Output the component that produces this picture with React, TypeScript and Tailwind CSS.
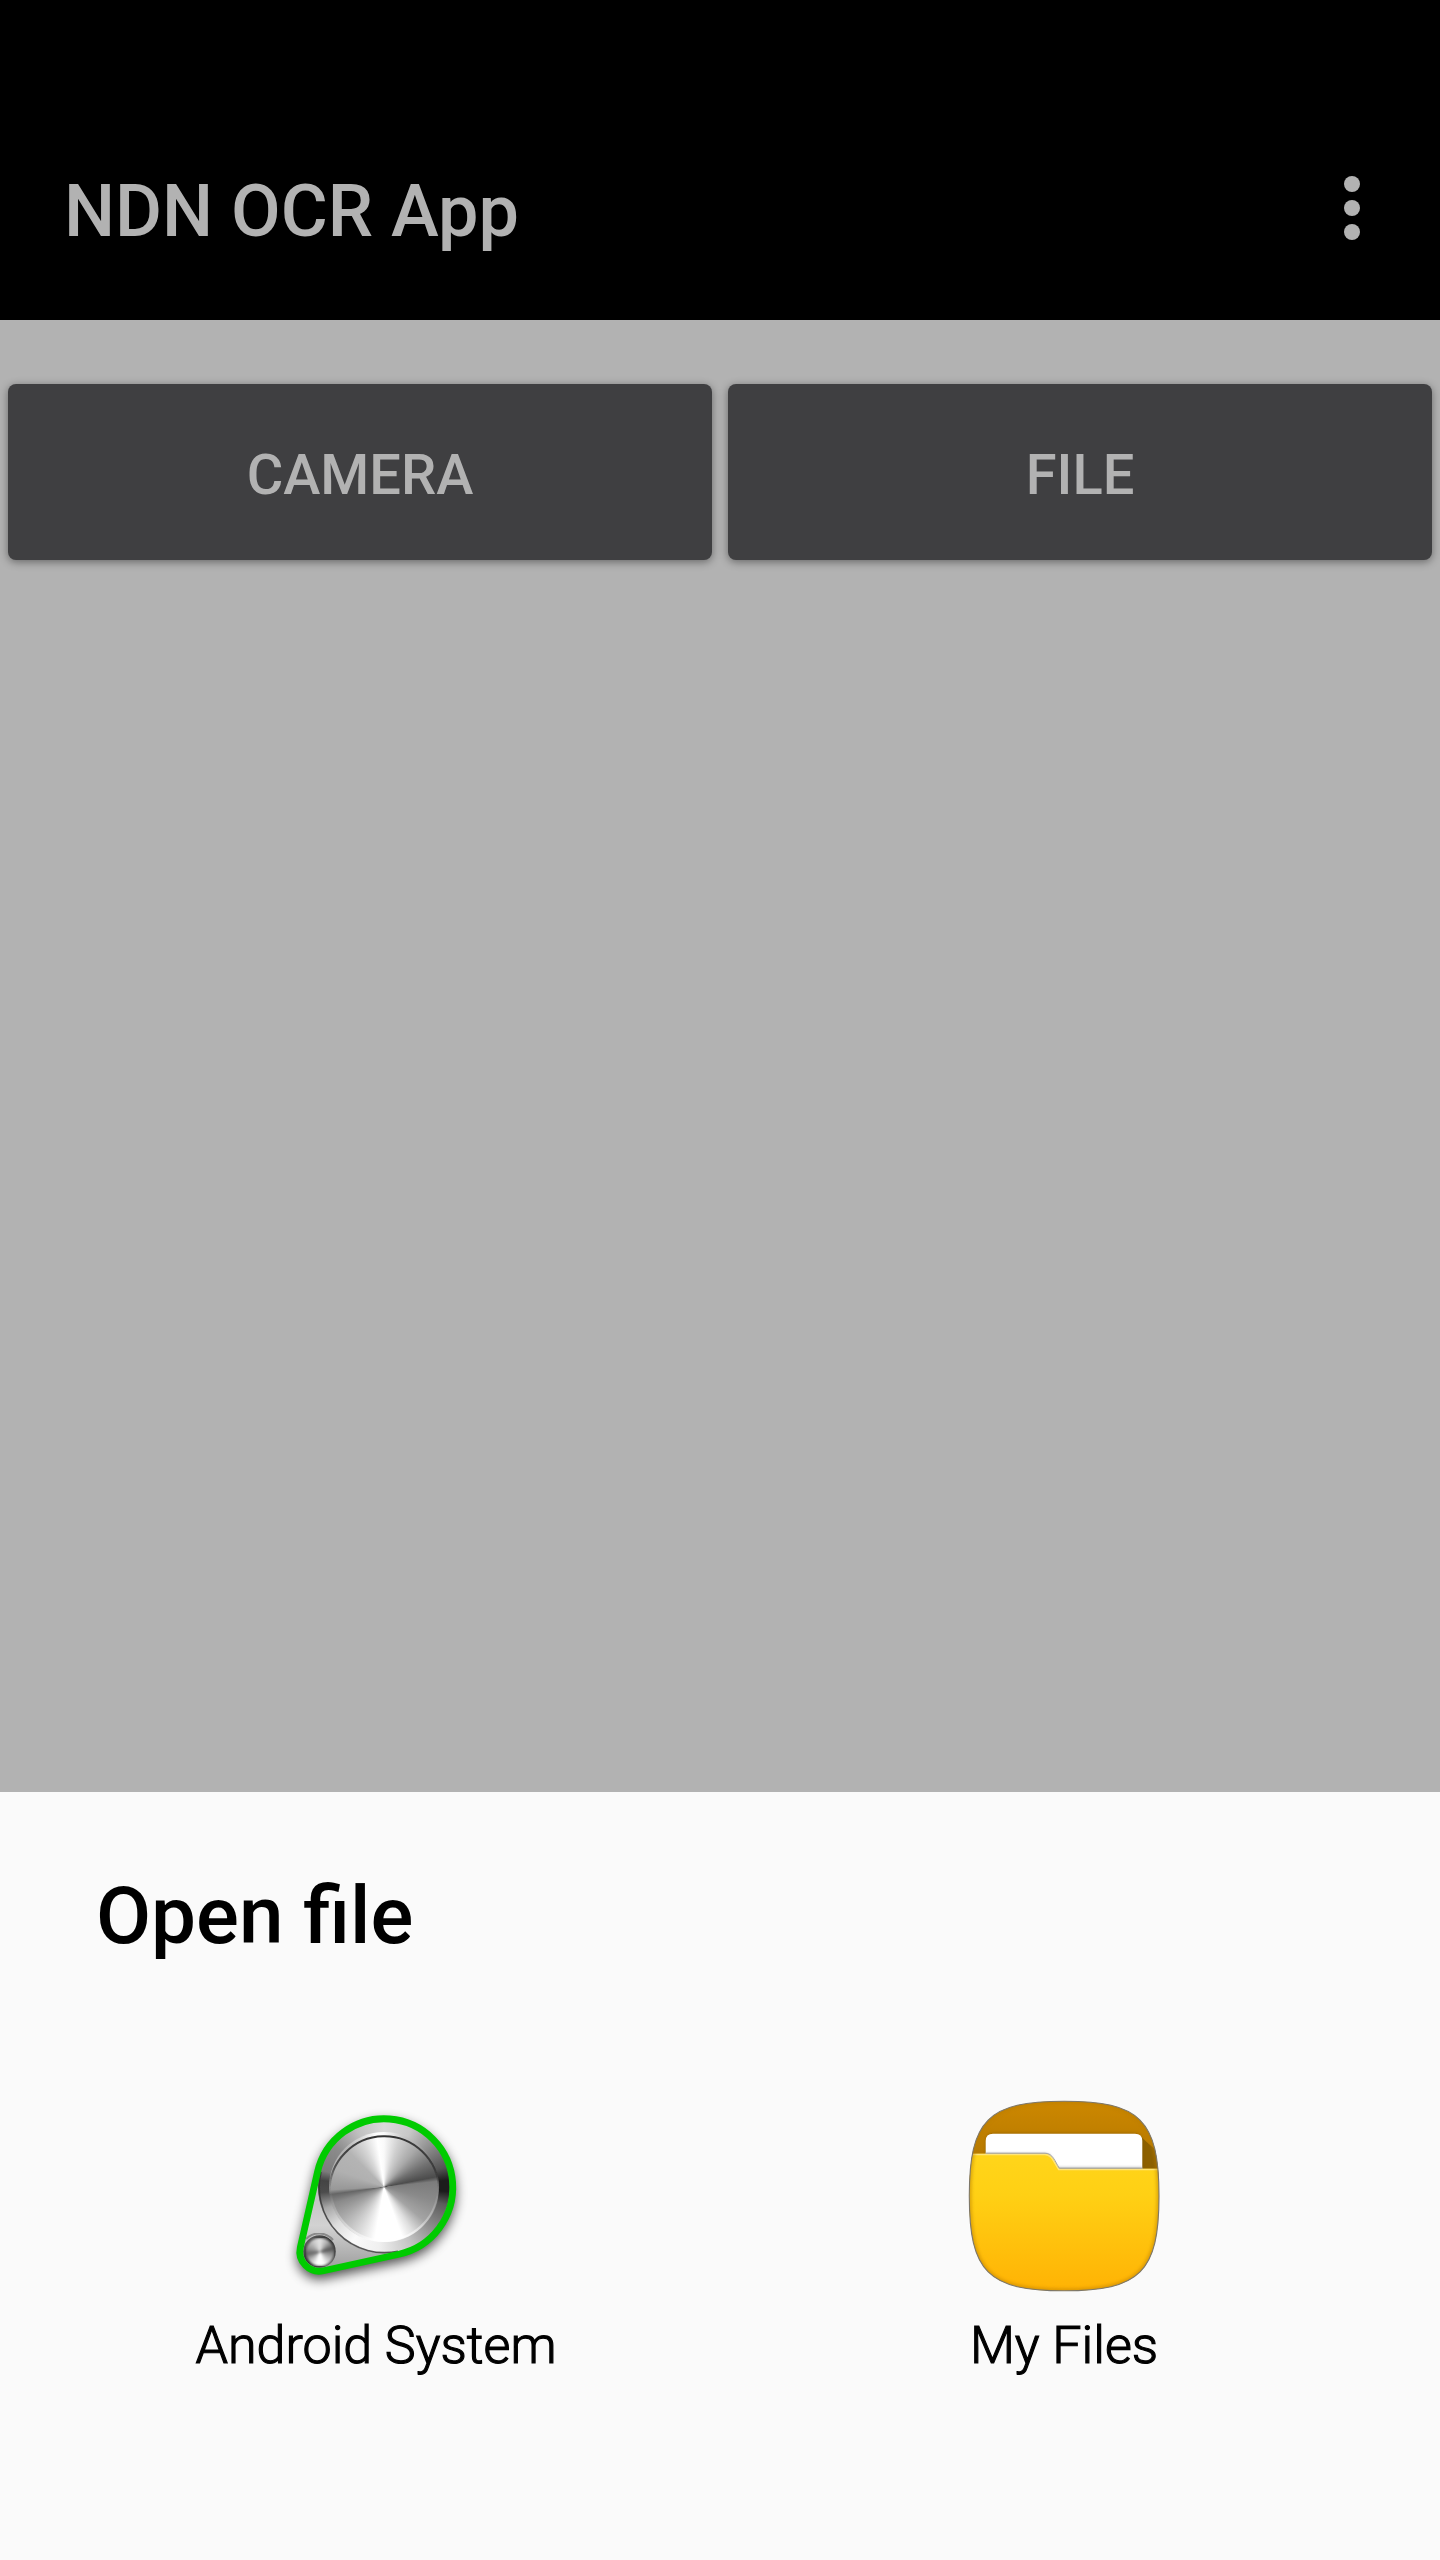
import type { ReactNode } from 'react';

function OverflowIcon() {
  return (
    <svg className="h-24 w-24" viewBox="0 0 96 96" fill="#b2b2b2">
      <circle cx="48" cy="24" r="8" />
      <circle cx="48" cy="48" r="8" />
      <circle cx="48" cy="72" r="8" />
    </svg>
  );
}

function AndroidSystemIcon() {
  const outline =
    'M20.3 147.4 L37.5 72 A68.5 68.5 0 1 1 118.9 154.2 L43.5 170.7 A19.5 19.5 0 0 1 20.3 147.4 Z';
  return (
    <svg className="h-48 w-48 overflow-visible" viewBox="0 0 192 192">
      <defs>
        <filter id="drop" x="-20%" y="-20%" width="140%" height="150%">
          <feGaussianBlur stdDeviation="6" />
        </filter>
        <filter id="soften" x="-5%" y="-5%" width="110%" height="110%">
          <feGaussianBlur stdDeviation="0.7" />
        </filter>
        <linearGradient id="plate" x1="0" y1="0" x2="0" y2="1">
          <stop offset="0" stopColor="#9a9a9a" />
          <stop offset="0.7" stopColor="#d2d2d2" />
          <stop offset="1" stopColor="#9c9c9c" />
        </linearGradient>
        <linearGradient id="rimTop" gradientUnits="userSpaceOnUse" x1="0" y1="32" x2="0" y2="92">
          <stop offset="0" stopColor="#2c2c2c" />
          <stop offset="0.6" stopColor="#2c2c2c" stopOpacity="0.7" />
          <stop offset="1" stopColor="#2c2c2c" stopOpacity="0" />
        </linearGradient>
        <linearGradient id="rimBottom" gradientUnits="userSpaceOnUse" x1="0" y1="92" x2="0" y2="142">
          <stop offset="0" stopColor="#fff" stopOpacity="0" />
          <stop offset="1" stopColor="#fff" stopOpacity="0.6" />
        </linearGradient>
        <linearGradient id="smallRim" x1="0" y1="0" x2="1" y2="1">
          <stop offset="0" stopColor="#6a6a6a" />
          <stop offset="0.5" stopColor="#2c2c2c" />
          <stop offset="1" stopColor="#6c6c6c" />
        </linearGradient>
      </defs>
      <path d={outline} fill="#000" stroke="#000" strokeWidth="6" opacity="0.68" filter="url(#drop)" transform="translate(0 5)" />
      <path d={outline} fill="url(#plate)" />
      <foreignObject x="38.3" y="21.3" width="132" height="132">
        <div className="h-[132px] w-[132px] rounded-full bg-[conic-gradient(#dadada_0deg,#c8c8c8_25deg,#8a8a8a_50deg,#555_72deg,#1c1c1c_84deg,#1c1c1c_94deg,#5c5c5c_106deg,#8c8c8c_130deg,#c4c4c4_155deg,#f0f0f0_185deg,#fafafa_210deg,#dcdcdc_232deg,#a8a8a8_250deg,#4c4c4c_265deg,#444_276deg,#7c7c7c_285deg,#8c8c8c_310deg,#c0c0c0_335deg,#dadada_360deg)]" />
      </foreignObject>
      <path d="M41 72 A65.3 65.3 0 0 0 118 151.2" fill="none" stroke="#333" strokeWidth="1.6" opacity="0.8" filter="url(#soften)" />
      <foreignObject x="49.3" y="32.3" width="110" height="110">
        <div className="h-[110px] w-[110px] rounded-full bg-[conic-gradient(#fafafa_0deg,#cfcfcf_18deg,#a8a8a8_40deg,#707070_62deg,#4c4c4c_79deg,#7c7c7c_84deg,#8a8a8a_105deg,#a4a4a4_130deg,#dedede_147deg,#fff_160deg,#fff_190deg,#d8d8d8_210deg,#a8a8a8_235deg,#8a8a8a_252deg,#666_262deg,#989898_267deg,#b0b0b0_290deg,#b4b4b4_315deg,#d8d8d8_335deg,#fff_352deg,#fafafa_360deg)]" />
      </foreignObject>
      <path d="M49.6 92 A54.7 54.7 0 1 1 159 90" fill="none" stroke="url(#rimTop)" strokeWidth="2" filter="url(#soften)" />
      <path d="M50.5 92 A54 54 0 0 0 158 92" fill="none" stroke="url(#rimBottom)" strokeWidth="2.4" filter="url(#soften)" />
      <path d="M26 139 A18 18 0 0 1 53 140" fill="none" stroke="#8a8a8a" strokeWidth="2" filter="url(#soften)" />
      <circle cx="39.5" cy="151.5" r="16.3" fill="url(#smallRim)" filter="url(#soften)" />
      <foreignObject x="25.5" y="138" width="28" height="28">
        <div className="h-[28px] w-[28px] rounded-full bg-[conic-gradient(#e4e4e4_0deg,#b0b0b0_35deg,#555_75deg,#888_95deg,#bbb_125deg,#fff_165deg,#fff_195deg,#b8b8b8_230deg,#666_262deg,#999_290deg,#ccc_330deg,#e4e4e4_360deg)] blur-[0.8px]" />
      </foreignObject>
      <path d={outline} fill="none" stroke="#00cb00" strokeWidth="6.8" filter="url(#soften)" />
    </svg>
  );
}

function MyFilesIcon() {
  const body =
    'M96.2 1.2 C172 1.2 191 20 191 96 C191 172 172 190.8 96.2 190.8 C20 190.8 1.3 172 1.3 96 C1.3 20 20 1.2 96.2 1.2 Z';
  return (
    <svg className="h-48 w-48" viewBox="0 0 192 192">
      <defs>
        <clipPath id="body">
          <path d={body} />
        </clipPath>
        <linearGradient id="back" x1="0" y1="0" x2="0" y2="1">
          <stop offset="0" stopColor="#cd8800" />
          <stop offset="1" stopColor="#ad7300" />
        </linearGradient>
        <linearGradient id="front" x1="0" y1="0" x2="0" y2="1">
          <stop offset="0" stopColor="#ffd51a" />
          <stop offset="0.3" stopColor="#ffd014" />
          <stop offset="1" stopColor="#ffb204" />
        </linearGradient>
        <filter id="blur" x="-10%" y="-20%" width="120%" height="140%">
          <feGaussianBlur stdDeviation="1.5" />
        </filter>
      </defs>
      <g clipPath="url(#body)">
        <rect width="192" height="80" fill="url(#back)" />
        <path d="M172 36 L192 54 V80 H172 Z" fill="#8c6000" />
        <rect x="17.7" y="33" width="156.6" height="50" rx="8" fill="#7a5200" opacity="0.5" filter="url(#blur)" />
        <path d="M17.7 80 V41 Q17.7 33.8 25 33.8 H167 Q174.3 33.8 174.3 41 V80 Z" fill="#fff" />
        <path d="M17.7 80 V53.4 H77 C86 53.4 85 67.6 92 67.6 H174.3 V80 Z" fill="#777" opacity="0.55" filter="url(#blur)" />
        <path d="M0 53.7 H77 C84.5 53.7 86.5 62 91 68.7 H192 V192 H0 Z" fill="url(#front)" />
        <path d="M0 54.5 H77 C84 54.5 86 63 90.7 69.5 H192" fill="none" stroke="#ffe477" strokeWidth="1.4" />
        <path d="M17.7 53.2 H77 C84.9 53.2 86.9 61.5 91.3 68.2 H174.3" fill="none" stroke="#999" strokeWidth="0.9" />
        <path d={body} fill="none" stroke="#b87d00" strokeWidth="5" opacity="0.45" filter="url(#blur)" />
      </g>
      <path d={body} fill="none" stroke="#7d776a" strokeWidth="1.1" />
    </svg>
  );
}

function ActionButton({ children }: { children: ReactNode }) {
  return (
    <button className="h-44 flex-1 rounded-lg bg-[#3f3f41] pt-1.5 text-[56px] leading-[66px] font-medium text-[#b2b2b2] shadow-[0_2px_8px_rgba(0,0,0,0.42)]">
      {children}
    </button>
  );
}

function AppChoice({ icon, label }: { icon: ReactNode; label: string }) {
  return (
    <div className="flex flex-col items-center">
      {icon}
      <span className="mt-[23px] text-[52px] leading-[62px] font-light [-webkit-text-stroke:1.15px_#000]">{label}</span>
    </div>
  );
}

export default function App() {
  return (
    <div className="flex h-[2560px] w-[1440px] flex-col overflow-hidden bg-[#b2b2b2] font-['Roboto',sans-serif]">
      <header className="flex h-80 items-center justify-between bg-black pt-24 pr-10 pl-16">
        <h1 className="pt-2 text-[72px] leading-[84px] font-medium text-[#b2b2b2]">NDN OCR App</h1>
        <OverflowIcon />
      </header>
      <main className="flex flex-1 items-start gap-4 px-2 pt-16">
        <ActionButton>CAMERA</ActionButton>
        <ActionButton>FILE</ActionButton>
      </main>
      <section className="h-[768px] bg-[#fafafa] px-8 pt-[77px] text-black">
        <h2 className="pl-16 text-[80px] leading-[94px] font-medium">Open file</h2>
        <div className="mt-[137px] grid grid-cols-2">
          <AppChoice icon={<AndroidSystemIcon />} label="Android System" />
          <AppChoice icon={<MyFilesIcon />} label="My Files" />
        </div>
      </section>
    </div>
  );
}
